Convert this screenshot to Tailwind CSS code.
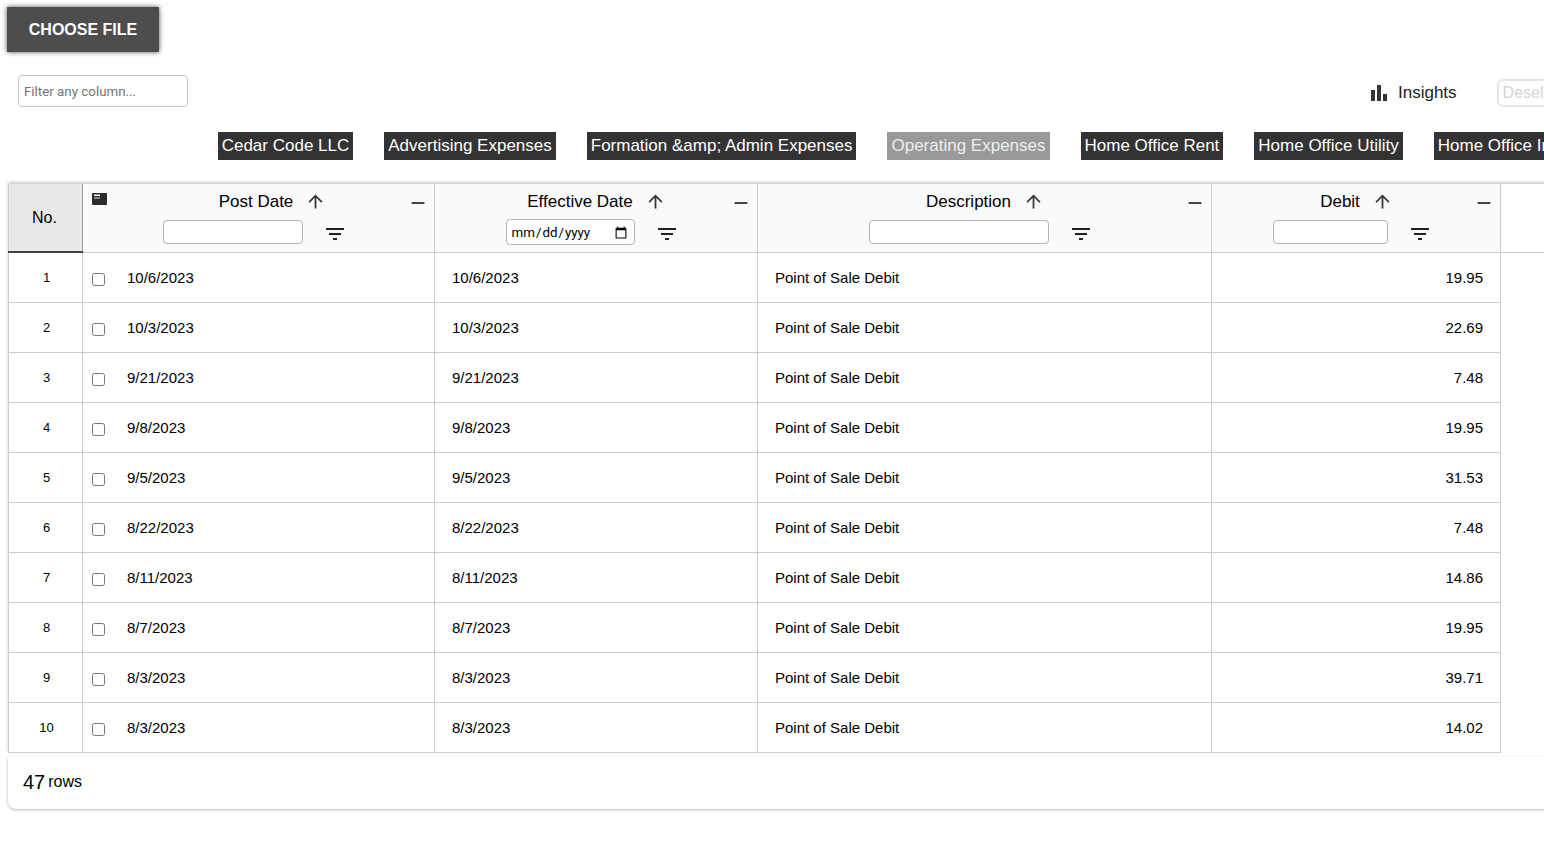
<!DOCTYPE html>
<html lang="en">
  <head>
    <meta charset="UTF-8" />
    <title>Transactions</title>
    <script src="https://cdn.jsdelivr.net/npm/@tailwindcss/browser@4"></script>
  </head>
  <body class="bg-white text-black font-['Liberation_Sans',sans-serif] w-[1544px] h-[854px] overflow-hidden">
    <div class="pt-[7px] pl-[7px]">
      <button class="w-[152px] h-[45px] bg-[#4d4d4d] text-white font-bold text-[16px] shadow-[0_0_5px_rgba(0,0,0,0.7)]">CHOOSE FILE</button>
    </div>

    <div class="flex items-center w-[1700px] mt-[23px] pl-[18px] h-[32px]">
      <input type="text" placeholder="Filter any column..." class="w-[170px] h-[32px] px-[5px] border border-[#c4c4c4] rounded-[4px] text-[13.33px] font-['Roboto',sans-serif] placeholder:text-[#757575]" />
      <div class="flex items-center self-end h-[28px] ml-[1179px] text-[17px] text-[#222]">
        <svg class="w-6 h-6 text-[#333]" viewBox="0 0 24 24" fill="currentColor"><path d="M4 9h4v11H4zM16 13h4v7h-4zM10 4h4v16h-4z" /></svg>
        <span class="ml-[7px]">Insights</span>
      </div>
      <button class="self-end ml-[40px] h-[28px] w-[100px] text-left pl-[4px] pb-[2px] border-2 border-[#e6e6e6] rounded-[6px] text-[16px] text-[#d4d4d4]">Deselect</button>
    </div>

    <div class="flex gap-[31px] w-[1800px] mt-[25px] pl-[217.7px] text-[17px] leading-[28px] text-white">
      <span class="h-[28px] px-[4px] bg-[#333]">Cedar Code LLC</span>
      <span class="h-[28px] px-[4px] bg-[#333]">Advertising Expenses</span>
      <span class="h-[28px] px-[4px] bg-[#333]">Formation &amp;amp; Admin Expenses</span>
      <span class="h-[28px] px-[4px] bg-[#999] text-[#eee]">Operating Expenses</span>
      <span class="h-[28px] px-[4px] bg-[#333]">Home Office Rent</span>
      <span class="h-[28px] px-[4px] bg-[#333]">Home Office Utility</span>
      <span class="h-[28px] px-[4px] bg-[#333]">Home Office Insurance</span>
    </div>

    <div class="mt-[24px] ml-[8px] w-[1600px] shadow-[0_-2px_3px_rgba(0,0,0,0.2)]">
      <table class="table-fixed border-collapse w-[1600px] text-[15px]">
        <colgroup>
          <col class="w-[74px]" />
          <col class="w-[352px]" />
          <col class="w-[323px]" />
          <col class="w-[454px]" />
          <col class="w-[289px]" />
          <col />
        </colgroup>
        <thead>
          <tr class="h-[68px] bg-[#fafafa] font-normal">
            <th class="bg-[#e8e8e8] border-b-2 border-b-[#444] border-l border-l-[#ccc] border-r border-r-[#999] text-[16px] font-normal pr-[2px]">No.</th>
            <th class="relative border-r border-b border-[#ccc] font-normal align-top">
              <svg class="absolute left-[9px] top-[9px] w-[16px] h-[13px]" viewBox="0 0 16 13"><rect width="15" height="12" rx="1" fill="#2b2b2b" /><rect x="2" y="1.5" width="6" height="1.5" fill="#fff" /><rect x="2" y="4.5" width="6" height="1" fill="#ddd" /></svg>
              <svg class="absolute right-[5px] top-[8px] w-[22px] h-[22px] text-[#333]" viewBox="0 0 24 24" fill="currentColor"><path d="M19 13H5v-2h14v2z" /></svg>
              <div class="flex justify-center items-center h-[35px] pl-[28px] text-[17px] gap-[12px]">
                Post Date
                <svg class="w-[21px] h-[21px] text-[#333]" viewBox="0 0 24 24" fill="currentColor"><path d="M4 12l1.41 1.41L11 7.83V20h2V7.83l5.58 5.59L20 12l-8-8-8 8z" /></svg>
              </div>
              <div class="flex justify-center items-center gap-[20px] pr-[8px] h-[24px] mt-[1px]">
                <input type="text" class="w-[140px] h-[24px] bg-white border border-[#b3b3b3] rounded-[4px]" />
                <svg class="w-6 h-6 mt-[4px] text-[#222]" viewBox="0 0 24 24" fill="currentColor"><path d="M10 18h4v-2h-4v2zM3 6v2h18V6H3zm3 7h12v-2H6v2z" /></svg>
              </div>
            </th>
            <th class="relative border-r border-b border-[#ccc] font-normal align-top">
              <svg class="absolute right-[5px] top-[8px] w-[22px] h-[22px] text-[#333]" viewBox="0 0 24 24" fill="currentColor"><path d="M19 13H5v-2h14v2z" /></svg>
              <div class="flex justify-center items-center h-[35px] pl-[1px] text-[17px] gap-[12px]">
                Effective Date
                <svg class="w-[21px] h-[21px] text-[#333]" viewBox="0 0 24 24" fill="currentColor"><path d="M4 12l1.41 1.41L11 7.83V20h2V7.83l5.58 5.59L20 12l-8-8-8 8z" /></svg>
              </div>
              <div class="flex justify-center items-center gap-[20px] pr-[8px] h-[24px] mt-[1px]">
                <input type="date" class="w-[129px] h-[26px] pl-[4px] pr-[4px] pt-[2px] bg-white border border-[#b3b3b3] rounded-[4px] text-[13.33px] font-['Roboto',sans-serif]" />
                <svg class="w-6 h-6 mt-[4px] text-[#222]" viewBox="0 0 24 24" fill="currentColor"><path d="M10 18h4v-2h-4v2zM3 6v2h18V6H3zm3 7h12v-2H6v2z" /></svg>
              </div>
            </th>
            <th class="relative border-r border-b border-[#ccc] font-normal align-top">
              <svg class="absolute right-[5px] top-[8px] w-[22px] h-[22px] text-[#333]" viewBox="0 0 24 24" fill="currentColor"><path d="M19 13H5v-2h14v2z" /></svg>
              <div class="flex justify-center items-center h-[35px] pl-[1px] text-[17px] gap-[12px]">
                Description
                <svg class="w-[21px] h-[21px] text-[#333]" viewBox="0 0 24 24" fill="currentColor"><path d="M4 12l1.41 1.41L11 7.83V20h2V7.83l5.58 5.59L20 12l-8-8-8 8z" /></svg>
              </div>
              <div class="flex justify-center items-center gap-[20px] pr-[8px] h-[24px] mt-[1px]">
                <input type="text" class="w-[180px] h-[24px] bg-white border border-[#b3b3b3] rounded-[4px]" />
                <svg class="w-6 h-6 mt-[4px] text-[#222]" viewBox="0 0 24 24" fill="currentColor"><path d="M10 18h4v-2h-4v2zM3 6v2h18V6H3zm3 7h12v-2H6v2z" /></svg>
              </div>
            </th>
            <th class="relative border-r border-b border-[#ccc] font-normal align-top">
              <svg class="absolute right-[5px] top-[8px] w-[22px] h-[22px] text-[#333]" viewBox="0 0 24 24" fill="currentColor"><path d="M19 13H5v-2h14v2z" /></svg>
              <div class="flex justify-center items-center h-[35px] pl-[1px] text-[17px] gap-[12px]">
                Debit
                <svg class="w-[21px] h-[21px] text-[#333]" viewBox="0 0 24 24" fill="currentColor"><path d="M4 12l1.41 1.41L11 7.83V20h2V7.83l5.58 5.59L20 12l-8-8-8 8z" /></svg>
              </div>
              <div class="flex justify-center items-center gap-[20px] pr-[8px] h-[24px] mt-[1px]">
                <input type="text" class="w-[115px] h-[24px] bg-white border border-[#b3b3b3] rounded-[4px]" />
                <svg class="w-6 h-6 mt-[4px] text-[#222]" viewBox="0 0 24 24" fill="currentColor"><path d="M10 18h4v-2h-4v2zM3 6v2h18V6H3zm3 7h12v-2H6v2z" /></svg>
              </div>
            </th>
            <th class="border-b border-[#ccc] bg-white"></th>
          </tr>
        </thead>
        <tbody>
          <tr class="h-[50px]"><td class="border border-[#ccc] text-center text-[13px] pl-[2px] pt-[1px]">1</td><td class="border border-[#ccc] pl-[9px] pt-[2px]"><span class="flex items-center"><input type="checkbox" class="w-[13px] h-[13px] mt-[2px]" /><span class="ml-[22px]">10/6/2023</span></span></td><td class="border border-[#ccc] pl-[17px] pt-[2px]">10/6/2023</td><td class="border border-[#ccc] pl-[17px] pt-[2px]">Point of Sale Debit</td><td class="border border-[#ccc] text-right pr-[17px] pt-[2px]">19.95</td><td></td></tr>
          <tr class="h-[50px]"><td class="border border-[#ccc] text-center text-[13px] pl-[2px] pt-[1px]">2</td><td class="border border-[#ccc] pl-[9px] pt-[2px]"><span class="flex items-center"><input type="checkbox" class="w-[13px] h-[13px] mt-[2px]" /><span class="ml-[22px]">10/3/2023</span></span></td><td class="border border-[#ccc] pl-[17px] pt-[2px]">10/3/2023</td><td class="border border-[#ccc] pl-[17px] pt-[2px]">Point of Sale Debit</td><td class="border border-[#ccc] text-right pr-[17px] pt-[2px]">22.69</td><td></td></tr>
          <tr class="h-[50px]"><td class="border border-[#ccc] text-center text-[13px] pl-[2px] pt-[1px]">3</td><td class="border border-[#ccc] pl-[9px] pt-[2px]"><span class="flex items-center"><input type="checkbox" class="w-[13px] h-[13px] mt-[2px]" /><span class="ml-[22px]">9/21/2023</span></span></td><td class="border border-[#ccc] pl-[17px] pt-[2px]">9/21/2023</td><td class="border border-[#ccc] pl-[17px] pt-[2px]">Point of Sale Debit</td><td class="border border-[#ccc] text-right pr-[17px] pt-[2px]">7.48</td><td></td></tr>
          <tr class="h-[50px]"><td class="border border-[#ccc] text-center text-[13px] pl-[2px] pt-[1px]">4</td><td class="border border-[#ccc] pl-[9px] pt-[2px]"><span class="flex items-center"><input type="checkbox" class="w-[13px] h-[13px] mt-[2px]" /><span class="ml-[22px]">9/8/2023</span></span></td><td class="border border-[#ccc] pl-[17px] pt-[2px]">9/8/2023</td><td class="border border-[#ccc] pl-[17px] pt-[2px]">Point of Sale Debit</td><td class="border border-[#ccc] text-right pr-[17px] pt-[2px]">19.95</td><td></td></tr>
          <tr class="h-[50px]"><td class="border border-[#ccc] text-center text-[13px] pl-[2px] pt-[1px]">5</td><td class="border border-[#ccc] pl-[9px] pt-[2px]"><span class="flex items-center"><input type="checkbox" class="w-[13px] h-[13px] mt-[2px]" /><span class="ml-[22px]">9/5/2023</span></span></td><td class="border border-[#ccc] pl-[17px] pt-[2px]">9/5/2023</td><td class="border border-[#ccc] pl-[17px] pt-[2px]">Point of Sale Debit</td><td class="border border-[#ccc] text-right pr-[17px] pt-[2px]">31.53</td><td></td></tr>
          <tr class="h-[50px]"><td class="border border-[#ccc] text-center text-[13px] pl-[2px] pt-[1px]">6</td><td class="border border-[#ccc] pl-[9px] pt-[2px]"><span class="flex items-center"><input type="checkbox" class="w-[13px] h-[13px] mt-[2px]" /><span class="ml-[22px]">8/22/2023</span></span></td><td class="border border-[#ccc] pl-[17px] pt-[2px]">8/22/2023</td><td class="border border-[#ccc] pl-[17px] pt-[2px]">Point of Sale Debit</td><td class="border border-[#ccc] text-right pr-[17px] pt-[2px]">7.48</td><td></td></tr>
          <tr class="h-[50px]"><td class="border border-[#ccc] text-center text-[13px] pl-[2px] pt-[1px]">7</td><td class="border border-[#ccc] pl-[9px] pt-[2px]"><span class="flex items-center"><input type="checkbox" class="w-[13px] h-[13px] mt-[2px]" /><span class="ml-[22px]">8/11/2023</span></span></td><td class="border border-[#ccc] pl-[17px] pt-[2px]">8/11/2023</td><td class="border border-[#ccc] pl-[17px] pt-[2px]">Point of Sale Debit</td><td class="border border-[#ccc] text-right pr-[17px] pt-[2px]">14.86</td><td></td></tr>
          <tr class="h-[50px]"><td class="border border-[#ccc] text-center text-[13px] pl-[2px] pt-[1px]">8</td><td class="border border-[#ccc] pl-[9px] pt-[2px]"><span class="flex items-center"><input type="checkbox" class="w-[13px] h-[13px] mt-[2px]" /><span class="ml-[22px]">8/7/2023</span></span></td><td class="border border-[#ccc] pl-[17px] pt-[2px]">8/7/2023</td><td class="border border-[#ccc] pl-[17px] pt-[2px]">Point of Sale Debit</td><td class="border border-[#ccc] text-right pr-[17px] pt-[2px]">19.95</td><td></td></tr>
          <tr class="h-[50px]"><td class="border border-[#ccc] text-center text-[13px] pl-[2px] pt-[1px]">9</td><td class="border border-[#ccc] pl-[9px] pt-[2px]"><span class="flex items-center"><input type="checkbox" class="w-[13px] h-[13px] mt-[2px]" /><span class="ml-[22px]">8/3/2023</span></span></td><td class="border border-[#ccc] pl-[17px] pt-[2px]">8/3/2023</td><td class="border border-[#ccc] pl-[17px] pt-[2px]">Point of Sale Debit</td><td class="border border-[#ccc] text-right pr-[17px] pt-[2px]">39.71</td><td></td></tr>
          <tr class="h-[50px]"><td class="border border-[#ccc] text-center text-[13px] pl-[2px] pt-[1px]">10</td><td class="border border-[#ccc] pl-[9px] pt-[2px]"><span class="flex items-center"><input type="checkbox" class="w-[13px] h-[13px] mt-[2px]" /><span class="ml-[22px]">8/3/2023</span></span></td><td class="border border-[#ccc] pl-[17px] pt-[2px]">8/3/2023</td><td class="border border-[#ccc] pl-[17px] pt-[2px]">Point of Sale Debit</td><td class="border border-[#ccc] text-right pr-[17px] pt-[2px]">14.02</td><td></td></tr>
        </tbody>
      </table>
    </div>

    <div class="mt-[4px] ml-[8px] w-[1600px] h-[52px] flex items-center pl-[15px] pb-[2px] rounded-bl-[8px] bg-white shadow-[0_1px_3px_rgba(0,0,0,0.3)]">
      <span class="text-[20px] mr-[3px]">47</span><span class="text-[16px]">rows</span>
    </div>
  </body>
</html>
